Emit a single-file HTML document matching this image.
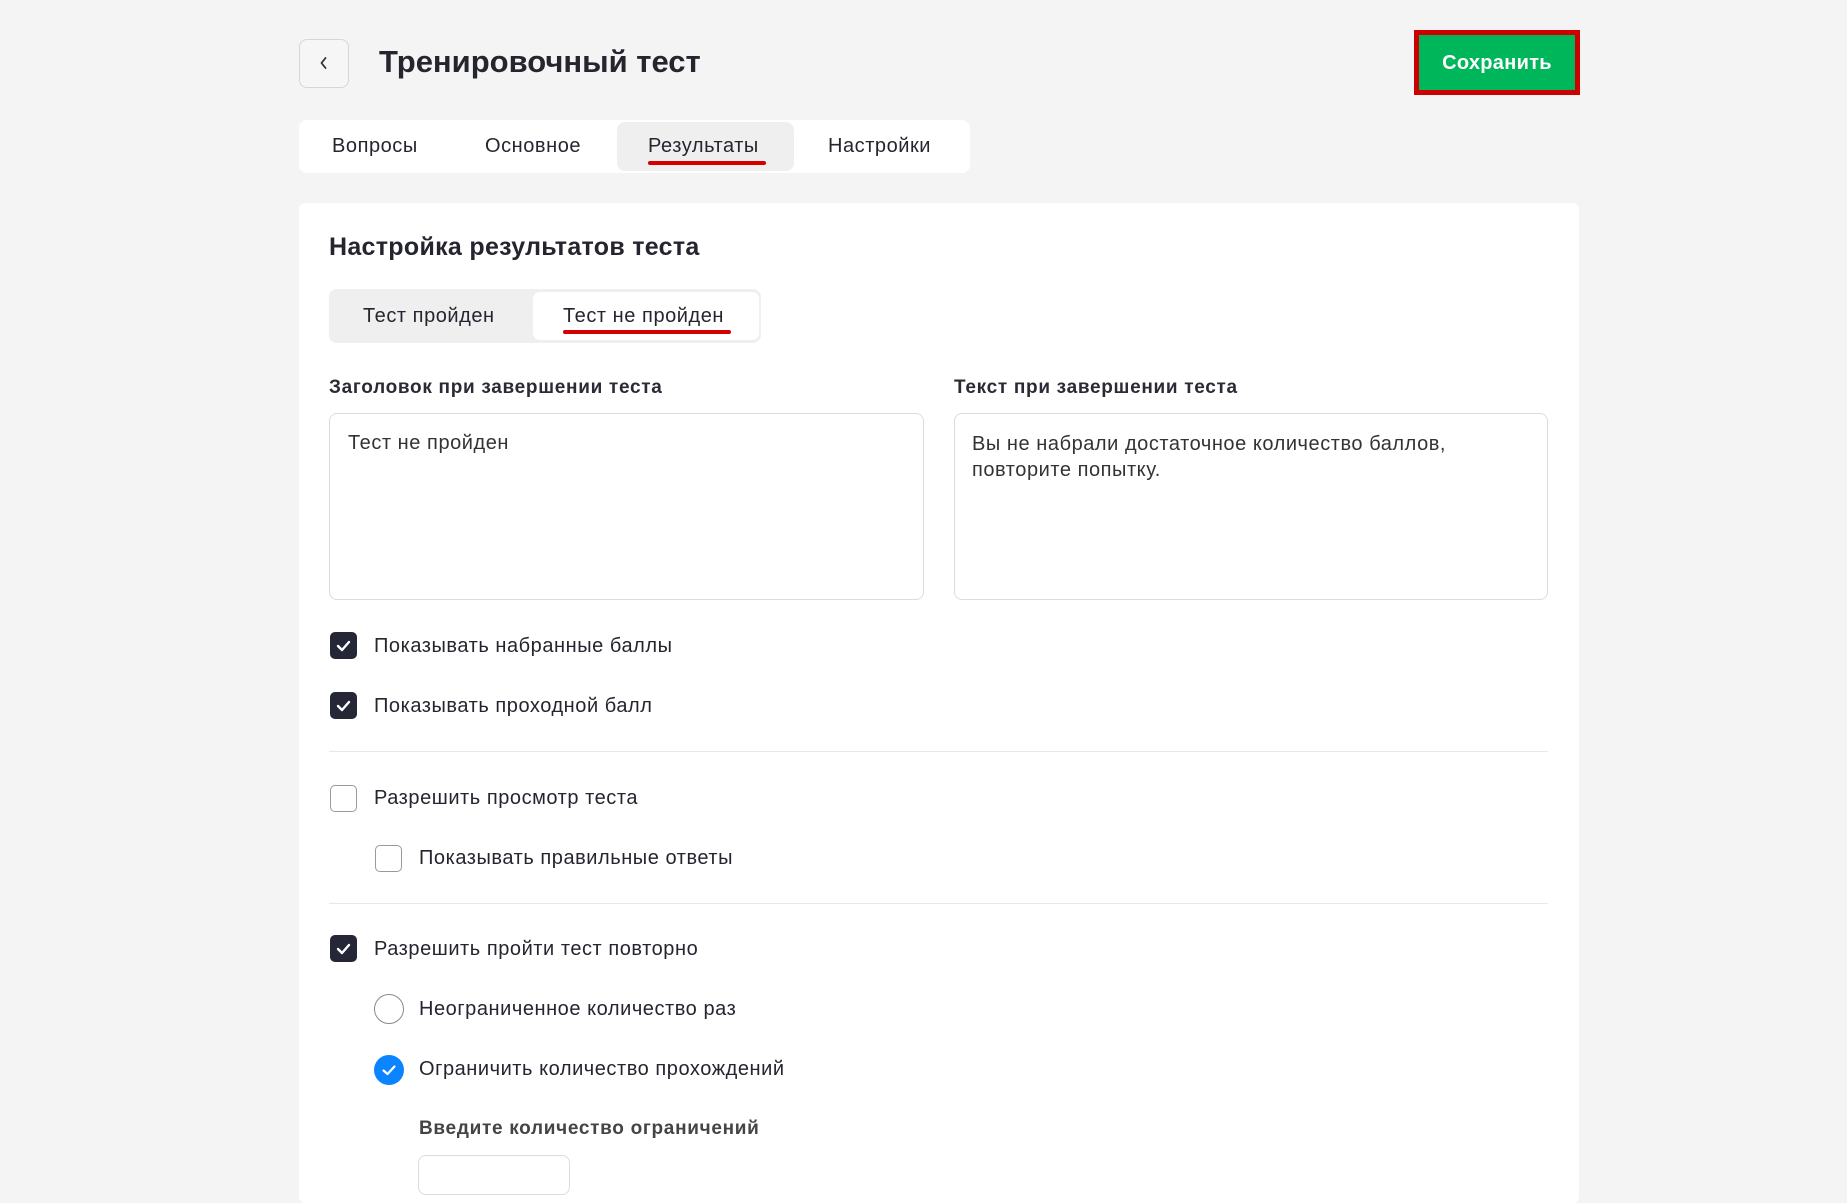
<!DOCTYPE html>
<html><head><meta charset="utf-8"><style>
*{box-sizing:border-box;margin:0;padding:0}
body{width:1847px;height:1161px;background:#f4f4f4;font-family:"Liberation Sans",sans-serif;color:#24252f;position:relative;overflow:hidden}
.a{position:absolute}
.t{position:absolute;font-size:20px;line-height:24px;white-space:nowrap;letter-spacing:0.55px}
.cb{position:absolute;width:27px;height:27px;border-radius:5px}
.cbon{background:#252636}
.cboff{border:1.5px solid #9a9a9a;background:#fff}
.rad{position:absolute;width:30px;height:30px;border-radius:50%}
.red{position:absolute;height:4px;background:#d40000;border-radius:2px}
.lb{font-weight:bold;font-size:19px;letter-spacing:0.7px}
</style></head><body>
<div class="a" style="left:299px;top:39px;width:50px;height:49px;border:1px solid #d6d6d6;border-radius:8px;background:#f6f6f6"></div>
<svg class="a" style="left:318px;top:56px" width="12" height="14" viewBox="0 0 12 14"><path d="M7.5 2 L3.5 7 L7.5 12" fill="none" stroke="#333" stroke-width="1.8" stroke-linecap="round" stroke-linejoin="round"/></svg>
<div class="t" style="left:379px;top:44px;font-size:31px;line-height:36px;font-weight:bold;letter-spacing:0">Тренировочный тест</div>

<div class="a" style="left:1414px;top:30px;width:166px;height:65px;background:#cc0000"></div>
<div class="a" style="left:1419px;top:35px;width:156px;height:55px;background:#00b65a"></div>
<div class="t" style="left:1419px;top:51px;width:156px;text-align:center;color:#fff;font-weight:bold;font-size:20px;letter-spacing:0.3px">Сохранить</div>

<div class="a" style="left:299px;top:120px;width:671px;height:53px;background:#fff;border-radius:8px"></div>
<div class="a" style="left:617px;top:122px;width:177px;height:49px;background:#efefef;border-radius:8px"></div>
<div class="t" style="left:332px;top:134px">Вопросы</div>
<div class="t" style="left:485px;top:134px">Основное</div>
<div class="t" style="left:648px;top:134px">Результаты</div>
<div class="red" style="left:648px;top:161px;width:118px"></div>
<div class="t" style="left:828px;top:134px">Настройки</div>

<div class="a" style="left:299px;top:203px;width:1280px;height:1000px;background:#fff;border-radius:6px"></div>
<div class="t" style="left:329px;top:232px;font-size:25px;line-height:30px;font-weight:bold;letter-spacing:0.3px">Настройка результатов теста</div>

<div class="a" style="left:329px;top:289px;width:432px;height:54px;background:#efefef;border-radius:8px"></div>
<div class="a" style="left:533px;top:292px;width:226px;height:48px;background:#fff;border-radius:7px"></div>
<div class="t" style="left:363px;top:304px">Тест пройден</div>
<div class="t" style="left:563px;top:304px">Тест не пройден</div>
<div class="red" style="left:563px;top:330px;width:168px"></div>

<div class="t lb" style="left:329px;top:376px;color:#2a2b35">Заголовок при завершении теста</div>
<div class="t lb" style="left:954px;top:376px;color:#2a2b35">Текст при завершении теста</div>
<div class="a" style="left:329px;top:413px;width:595px;height:187px;border:1px solid #dcdcdc;border-radius:8px"></div>
<div class="a" style="left:954px;top:413px;width:594px;height:187px;border:1px solid #dcdcdc;border-radius:8px"></div>
<div class="t" style="left:348px;top:431px;color:#333">Тест не пройден</div>
<div class="t" style="left:972px;top:431px;color:#333;line-height:26px">Вы не набрали достаточное количество баллов,<br>повторите попытку.</div>

<svg width="0" height="0" style="position:absolute"><defs><path id="ck" d="M8 14 L12 18 L19 10" fill="none" stroke="#fff" stroke-width="2.4" stroke-linecap="round" stroke-linejoin="round"/></defs></svg>

<div class="cb cbon" style="left:330px;top:632px"><svg width="27" height="27"><use href="#ck"/></svg></div>
<div class="t" style="left:374px;top:634px">Показывать набранные баллы</div>
<div class="cb cbon" style="left:330px;top:692px"><svg width="27" height="27"><use href="#ck"/></svg></div>
<div class="t" style="left:374px;top:694px">Показывать проходной балл</div>
<div class="a" style="left:329px;top:751px;width:1219px;height:1px;background:#e8e8e8"></div>
<div class="cb cboff" style="left:330px;top:785px"></div>
<div class="t" style="left:374px;top:786px">Разрешить просмотр теста</div>
<div class="cb cboff" style="left:375px;top:845px"></div>
<div class="t" style="left:419px;top:846px">Показывать правильные ответы</div>
<div class="a" style="left:329px;top:903px;width:1219px;height:1px;background:#e8e8e8"></div>
<div class="cb cbon" style="left:330px;top:935px"><svg width="27" height="27"><use href="#ck"/></svg></div>
<div class="t" style="left:374px;top:937px">Разрешить пройти тест повторно</div>
<div class="rad" style="left:374px;top:994px;border:1.5px solid #8a8a8a"></div>
<div class="t" style="left:419px;top:997px">Неограниченное количество раз</div>
<div class="rad" style="left:374px;top:1055px;background:#0a84ff"><svg width="30" height="30"><path d="M9.5 15.5 L13.5 19 L20.5 11.5" fill="none" stroke="#fff" stroke-width="2.2" stroke-linecap="round" stroke-linejoin="round"/></svg></div>
<div class="t" style="left:419px;top:1057px">Ограничить количество прохождений</div>
<div class="t lb" style="left:419px;top:1117px;color:#444">Введите количество ограничений</div>
<div class="a" style="left:418px;top:1155px;width:152px;height:40px;border:1px solid #dcdcdc;border-radius:8px"></div>
</body></html>
